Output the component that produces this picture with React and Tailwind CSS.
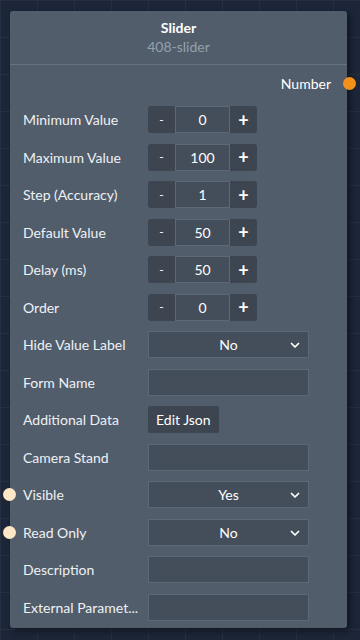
const steppers = [
  { label: "Minimum Value", value: "0" },
  { label: "Maximum Value", value: "100" },
  { label: "Step (Accuracy)", value: "1" },
  { label: "Default Value", value: "50" },
  { label: "Delay (ms)", value: "50" },
  { label: "Order", value: "0" },
];

function Chevron() {
  return (
    <svg width="12" height="12" viewBox="0 0 24 24" fill="none" stroke="white" strokeWidth="3.5" strokeLinecap="round" strokeLinejoin="round">
      <path d="M5 9l7 7 7-7" />
    </svg>
  );
}

function Row({ label, dot, children }) {
  return (
    <div className="relative flex items-center h-[37.5px]">
      {dot && <span className="absolute -left-[7px] w-[13px] h-[13px] rounded-full bg-[#fde7c6]" />}
      <div className="w-[138px] shrink-0 pl-[13px] pr-1 whitespace-nowrap overflow-hidden text-[14px] text-[#eef1f4]">{label}</div>
      {children}
    </div>
  );
}

function Stepper({ value }) {
  return (
    <div className="flex h-[27px] rounded-[3px] overflow-hidden">
      <button className="w-[27px] bg-[#3d4550] text-white text-[12px] leading-none">-</button>
      <div className="w-[55px] flex items-center justify-center bg-[#444e5a] border border-[#5c6877] text-[14px] text-white">{value}</div>
      <button className="w-[27px] bg-[#3d4550] text-white text-[18px] font-bold leading-none">+</button>
    </div>
  );
}

function Select({ value }) {
  return (
    <div className="relative w-[161px] h-[27px] flex items-center justify-center bg-[#444e5a] border border-[#5c6877] text-[14px] text-white">
      {value}
      <span className="absolute right-[7px] top-[7px]"><Chevron /></span>
    </div>
  );
}

function Field() {
  return <div className="w-[161px] h-[27px] bg-[#444e5a] border border-[#5c6877]" />;
}

export default function App() {
  return (
    <div
      className="w-[360px] h-[640px] overflow-hidden bg-[#1c2638] bg-[linear-gradient(rgba(255,255,255,0.04)_1px,transparent_1px),linear-gradient(90deg,rgba(255,255,255,0.04)_1px,transparent_1px)] bg-[size:37px_37px] pt-[11px] pl-[10px]"
      style={{ fontFamily: "Lato, 'Open Sans', sans-serif" }}
    >
      <div className="relative w-[337px] bg-[#515d6b] rounded-[3px] shadow-[3px_3px_6px_rgba(0,0,0,0.45)] pb-[2px]">
        <div className="flex flex-col items-center pt-[8px] pb-[7px] border-b border-[#66727f]">
          <div className="text-[14px] font-bold text-white leading-[18px]">Slider</div>
          <div className="text-[14px] text-[#95a0ab] leading-[20px]">408-slider</div>
        </div>
        <div className="relative flex justify-end items-center h-[36px] pr-[16px]">
          <span className="text-[14px] text-white">Number</span>
          <span className="absolute -right-[9px] w-[13px] h-[13px] rounded-full bg-[#f39019]" />
        </div>
        <div className="flex flex-col">
          {steppers.map((s) => (
            <Row key={s.label} label={s.label}>
              <Stepper value={s.value} />
            </Row>
          ))}
          <Row label="Hide Value Label"><Select value="No" /></Row>
          <Row label="Form Name"><Field /></Row>
          <Row label="Additional Data">
            <button className="h-[27px] px-[8px] bg-[#3d4550] rounded-[2px] text-[14px] text-white">Edit Json</button>
          </Row>
          <Row label="Camera Stand"><Field /></Row>
          <Row label="Visible" dot><Select value="Yes" /></Row>
          <Row label="Read Only" dot><Select value="No" /></Row>
          <Row label="Description"><Field /></Row>
          <Row label="External Paramet...">
            <Field />
          </Row>
        </div>
      </div>
    </div>
  );
}
